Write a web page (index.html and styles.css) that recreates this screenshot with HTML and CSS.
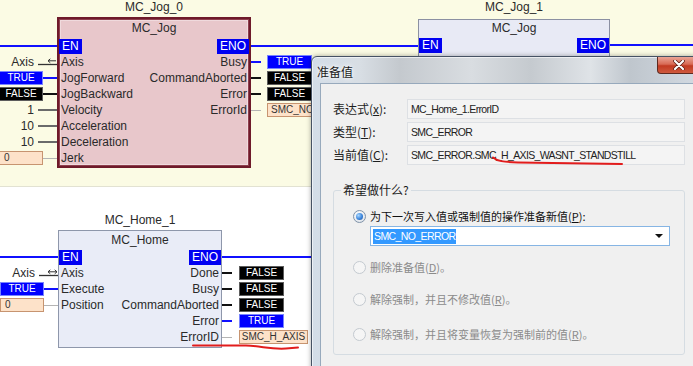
FILE: index.html
```html
<!DOCTYPE html>
<html>
<head>
<meta charset="utf-8">
<title>MC_Jog / MC_Home</title>
<link rel="stylesheet" href="styles.css">
</head>
<body>
<div class="canvas">
  <section class="sheet sheet-top">
    <div class="node node-jog0">
      <div class="inst">MC_Jog_0</div>
      <div class="ins ins-jog0">
        <div class="row"><span class="wire wire-blue wire-fill"></span></div>
        <div class="row"><span class="lit">Axis</span><span class="wire wire-ref"><svg width="19" height="10" viewBox="0 0 19 10"><path d="M0 6.5H19" stroke="#333" stroke-width="1.3"/><path d="M10 2.8H18M12.3 0.8L10 2.8L12.3 4.8" stroke="#333" stroke-width="1" fill="none"/></svg></span></div>
        <div class="row"><span class="val val-in val-true">TRUE</span><span class="wire wire-blue wire-s"></span></div>
        <div class="row"><span class="val val-in val-false">FALSE</span><span class="wire wire-black wire-s"></span></div>
        <div class="row"><span class="lit">1</span><span class="wire wire-grey"></span></div>
        <div class="row"><span class="lit">10</span><span class="wire wire-grey"></span></div>
        <div class="row"><span class="lit">10</span><span class="wire wire-grey"></span></div>
        <div class="row"><span class="val val-in val-num">0</span><span class="wire wire-light wire-s"></span></div>
      </div>
      <div class="block block-jog0">
        <div class="type type-jog0">MC_Jog</div>
        <div class="pins"><span class="en">EN</span><span class="en">ENO</span></div>
        <div class="pins"><span class="pin">Axis</span><span class="pin">Busy</span></div>
        <div class="pins"><span class="pin">JogForward</span><span class="pin">CommandAborted</span></div>
        <div class="pins"><span class="pin">JogBackward</span><span class="pin">Error</span></div>
        <div class="pins"><span class="pin">Velocity</span><span class="pin">ErrorId</span></div>
        <div class="pins"><span class="pin">Acceleration</span></div>
        <div class="pins"><span class="pin">Deceleration</span></div>
        <div class="pins"><span class="pin">Jerk</span></div>
      </div>
      <div class="outs outs-jog0">
        <div class="row"><span class="wire wire-blue link-jog0"></span></div>
        <div class="row"><span class="wire wire-blue wire-o"></span><span class="val val-out val-true">TRUE</span></div>
        <div class="row"><span class="wire wire-black wire-o"></span><span class="val val-out val-false">FALSE</span></div>
        <div class="row"><span class="wire wire-black wire-o"></span><span class="val val-out val-false">FALSE</span></div>
        <div class="row"><span class="wire wire-light wire-o"></span><span class="val val-out val-num val-left">SMC_NO</span></div>
      </div>
    </div>

    <div class="node node-jog1">
      <div class="inst">MC_Jog_1</div>
      <div class="block block-jog1">
        <div class="type type-jog1">MC_Jog</div>
        <div class="pins"><span class="en">EN</span><span class="en">ENO</span></div>
      </div>
      <div class="outs outs-jog1">
        <div class="row"><span class="wire wire-blue link-jog1"></span></div>
      </div>
    </div>
  </section>

  <section class="sheet sheet-bottom">
    <div class="node node-home">
      <div class="inst">MC_Home_1</div>
      <div class="ins ins-home">
        <div class="row"><span class="wire wire-blue wire-fill"></span></div>
        <div class="row"><span class="lit">Axis</span><span class="wire wire-ref"><svg width="19" height="10" viewBox="0 0 19 10"><path d="M0 6.5H19" stroke="#333" stroke-width="1.3"/><path d="M9 2.8H18M11.3 0.8L9 2.8L11.3 4.8M15.7 0.8L18 2.8L15.7 4.8" stroke="#333" stroke-width="1" fill="none"/></svg></span></div>
        <div class="row"><span class="val val-in val-true">TRUE</span><span class="wire wire-blue wire-s"></span></div>
        <div class="row"><span class="val val-in val-num">0</span><span class="wire wire-light wire-s"></span></div>
      </div>
      <div class="block block-home">
        <div class="type type-home">MC_Home</div>
        <div class="pins"><span class="en">EN</span><span class="en">ENO</span></div>
        <div class="pins"><span class="pin">Axis</span><span class="pin">Done</span></div>
        <div class="pins"><span class="pin">Execute</span><span class="pin">Busy</span></div>
        <div class="pins"><span class="pin">Position</span><span class="pin">CommandAborted</span></div>
        <div class="pins"><span class="pin"></span><span class="pin">Error</span></div>
        <div class="pins"><span class="pin"></span><span class="pin">ErrorID</span></div>
      </div>
      <div class="outs outs-home">
        <div class="row"><span class="wire wire-blue link-home"></span></div>
        <div class="row"><span class="wire wire-black wire-o"></span><span class="val val-out val-false">FALSE</span></div>
        <div class="row"><span class="wire wire-black wire-o"></span><span class="val val-out val-false">FALSE</span></div>
        <div class="row"><span class="wire wire-black wire-o"></span><span class="val val-out val-false">FALSE</span></div>
        <div class="row"><span class="wire wire-blue wire-o"></span><span class="val val-out val-true">TRUE</span></div>
        <div class="row"><span class="wire wire-light wire-o"></span><span class="val val-out val-num val-wide">SMC_H_AXIS</span></div>
      </div>
    </div>
  </section>

  <div class="dialog">
    <div class="titlebar"><span class="title">准备值</span></div>
    <div class="close"><svg width="12" height="10" viewBox="0 0 12 10"><path d="M2 1L10 9M10 1L2 9" stroke="#5a1a10" stroke-width="3.6" stroke-linecap="round"/><path d="M2 1L10 9M10 1L2 9" stroke="#fff" stroke-width="2.2" stroke-linecap="round"/></svg></div>
    <div class="client">
      <div class="fields">
        <span class="label">表达式(<u>x</u>):</span><span class="field">MC_Home_1.ErrorID</span>
        <span class="label">类型(<u>T</u>):</span><span class="field">SMC_ERROR</span>
        <span class="label">当前值(<u>C</u>):</span><span class="field">SMC_ERROR.SMC_H_AXIS_WASNT_STANDSTILL</span>
      </div>
      <div class="group">
        <span class="legend">希望做什么?</span>
        <div class="opt opt-1"><span class="radio radio-on"></span><span class="opt-text">为下一次写入值或强制值的操作准备新值(<u>P</u>):</span></div>
        <div class="combo"><span class="combo-sel">SMC_NO_ERROR</span><span class="combo-arrow"></span></div>
        <div class="opt opt-off opt-2"><span class="radio"></span><span class="opt-text">删除准备值(<u>D</u>)。</span></div>
        <div class="opt opt-off opt-3"><span class="radio"></span><span class="opt-text">解除强制，并且不修改值(<u>R</u>)。</span></div>
        <div class="opt opt-off opt-4"><span class="radio"></span><span class="opt-text">解除强制，并且将变量恢复为强制前的值(<u>R</u>)。</span></div>
      </div>
    </div>
  </div>

  <svg class="ink" width="693" height="366" viewBox="0 0 693 366">
    <path d="M493 157.5C497 161 503 162 518 162.5L622 164" stroke="#e21c1c" stroke-width="2" fill="none" stroke-linecap="round"/>
    <path d="M193 345.5L246 345.5C262 346 270 349.5 286 348.5L298 347.5" stroke="#e21c1c" stroke-width="2" fill="none" stroke-linecap="round"/>
  </svg>
</div>
</body>
</html>
```

FILE: styles.css
```css
* { box-sizing: border-box; margin: 0; padding: 0; }
html, body { width: 693px; height: 366px; overflow: hidden; background: #fff; }
body { font-family: "Liberation Sans", Arial, sans-serif; font-size: 12px; color: #2a2a2a; }

.canvas { position: relative; width: 693px; height: 366px; overflow: hidden; }
.sheet { position: relative; }
.sheet-top { height: 187px; background: #fbfbe4; border-bottom: 1px solid #e2e2d2; }
.sheet-bottom { height: 179px; background: #fff; }

/* function block nodes on the diagram canvas */
.node { position: absolute; display: grid; grid-template-rows: 17px auto; align-items: start; }
.node-jog0 { left: 0; top: 0; grid-template-columns: 57px 194px auto; }
.node-jog1 { left: 418px; top: 0; grid-template-columns: 192px auto; grid-template-rows: 19px auto; }
.node-home { left: 0; top: 26px; grid-template-columns: 58px 164px auto; }

.inst { grid-row: 1; height: 17px; line-height: 15px; text-align: center; white-space: nowrap; color: #2a2a2a; }
.node-jog0 .inst, .node-home .inst { grid-column: 2; }
.node-jog1 .inst { grid-column: 1; height: 19px; line-height: 15px; }

.ins { grid-row: 2; grid-column: 1; display: flex; flex-direction: column; }
.ins-jog0 { padding-top: 21px; }
.ins-home { padding-top: 19px; }
.outs { grid-row: 2; display: flex; flex-direction: column; }
.outs-jog0 { padding-top: 21px; }
.outs-jog1 { padding-top: 18px; }
.outs-home { padding-top: 19px; }

.row { height: 16px; display: flex; align-items: center; }
.ins .row { justify-content: flex-end; }

.block { grid-row: 2; }
.block-jog0 {
  height: 151px; background: #e8c7cb;
  border: 2px solid #6e1a2a;
  box-shadow: inset 0 0 0 1px #8e3f4d, inset 0 0 0 2px #f0dadd;
}
.block-jog1 { height: 45px; background: #e8eaf5; border: 1px solid #8b90a2; }
.block-home { height: 118px; background: #e9ecf7; border: 1px solid #8e97ab; }

.type { text-align: center; white-space: nowrap; color: #2a2a2a; }
.type-jog0 { height: 19px; line-height: 19px; }
.type-jog1 { height: 17px; line-height: 17px; }
.type-home { height: 18px; line-height: 18px; }

.pins { height: 16px; display: flex; justify-content: space-between; align-items: center; white-space: nowrap; }
.pin { padding: 0 2px; line-height: 16px; }
.en { height: 15px; line-height: 15px; padding: 0 3px; background: #0000f2; color: #fff; }

/* wires */
.wire { display: block; flex: none; }
.wire-fill { flex: 1; height: 2px; background: #1010ff; }
.wire-blue { height: 2px; background: #1010ff; }
.wire-black { height: 2px; background: #111; }
.wire-grey { width: 19px; height: 2px; background: #6a6a6a; }
.wire-light { height: 1px; background: #b4b4b4; }
.wire-s { width: 14px; }
.wire-o { width: 10px; margin-right: 6px; }
.outs-home .wire-o { margin-right: 7px; }
.wire-ref { width: 19px; height: 10px; margin-bottom: -1px; }
.wire-ref svg { display: block; }
.link-jog0 { width: 167px; }
.link-jog1 { width: 90px; }
.link-home { width: 95px; }

.lit { margin-right: 4px; white-space: nowrap; }

/* value boxes */
.val {
  display: block; height: 14px; line-height: 12px; font-size: 10px;
  border: 1px solid; text-align: center; white-space: nowrap; overflow: hidden;
}
.val-in { width: 44px; margin-left: -1px; }
.val-out { width: 45px; }
.val-wide { width: 69px; }
.val-true { background: #0000ff; border-color: #7884ff; color: #fff; }
.val-false { background: #000; border-color: #5c5c5c; color: #fff; }
.val-num { background: #fde2c9; border-color: #c79470; color: #333; text-align: left; padding-left: 4px; }
.val-left { padding-left: 3px; }
.val-wide { text-align: center; padding-left: 0; }

/* dialog */
.dialog {
  position: absolute; left: 311px; top: 56px; width: 400px; height: 320px; z-index: 5;
  border: 1px solid #465264; border-radius: 6px 6px 0 0;
  background: linear-gradient(90deg, #d3dde8 0%, #d8dee4 12%, #c4c9ce 22%, #d9dde1 40%, #c5cacf 55%, #dfe3e7 70%, #bfc6cd 80%, #d6dde5 100%);
  box-shadow: 0 0 5px rgba(0, 0, 0, 0.35), inset 0 0 0 1px rgba(255, 255, 255, 0.6);
  display: flex; flex-direction: column; padding-left: 8px;
  font-family: "Noto Sans CJK SC", "Liberation Sans", sans-serif;
}
.titlebar { height: 26px; display: flex; align-items: center; margin-left: -3px; padding-top: 2px; }
.title { font-size: 12px; color: #1b1b1b; text-shadow: 0 0 6px #fff, 0 0 3px #fff; }
.close {
  position: absolute; left: 345px; top: 0; width: 44px; height: 17px;
  border: 1px solid #5e2a20; border-top: none; border-radius: 0 0 4px 4px;
  background: linear-gradient(180deg, #eaa596 0%, #d86a55 45%, #c23a22 55%, #cf5a3e 100%);
  display: flex; align-items: center; justify-content: center;
}
.close svg { display: block; }
.client { flex: 1; background: #f0f0f0; border-top: 1px solid #97a9bc; border-left: 1px solid #97a9bc; }

.fields {
  display: grid; grid-template-columns: 74px 278px; grid-auto-rows: 20px; row-gap: 3px;
  padding: 15px 0 0 12px;
}
.label { font-size: 12px; line-height: 20px; color: #1e1e1e; white-space: nowrap; }
.field {
  border: 1px solid #dde0e4; background: #f4f4f4; padding-left: 3px;
  font-family: "Liberation Sans", Arial, sans-serif; font-size: 10.5px; letter-spacing: -0.65px;
  line-height: 18px; color: #222; white-space: nowrap; overflow: hidden;
}

.group {
  position: relative; width: 352px; height: 165px; margin: 25px 0 0 12px;
  border: 1px solid #d5dce2; border-radius: 3px;
  padding: 17px 0 0 19px;
  display: flex; flex-direction: column; align-items: flex-start;
}
.legend {
  position: absolute; left: 7px; top: -10px; padding: 0 2px; background: #f0f0f0;
  font-size: 12px; line-height: 18px; color: #1a1a1a;
}
.opt { height: 16px; display: flex; align-items: center; gap: 4px; white-space: nowrap; }
.opt-text { font-size: 11px; color: #111; }
.opt-off .opt-text { color: #8b8b8b; }
.opt-2 { margin-top: 13px; }
.opt-3 { margin-top: 16px; }
.opt-4 { margin-top: 19px; }
.radio {
  position: relative; width: 13px; height: 13px; border-radius: 50%; flex: none;
  border: 1px solid #c4cad0; background: #f5f5f5;
}
.radio-on { border-color: #7f92a8; background: radial-gradient(circle at 40% 35%, #ffffff, #d6dde6); }
.radio-on::after {
  content: ""; position: absolute; left: 2px; top: 2px; width: 7px; height: 7px; border-radius: 50%;
  background: radial-gradient(circle at 35% 35%, #a9d7ff 0%, #3c86dc 55%, #1c4f9c 100%);
}
.combo {
  width: 300px; height: 20px; margin: 2px 0 0 17px;
  border: 1px solid #86b5e4; background: #fff;
  display: flex; align-items: center; padding: 0 6px 0 2px;
}
.combo-sel {
  background: #3399ff; color: #fff; padding: 0 1px; line-height: 15px;
  font-family: "Liberation Sans", Arial, sans-serif; font-size: 10.5px; letter-spacing: -0.6px;
}
.combo-arrow {
  margin-left: auto; width: 0; height: 0;
  border-left: 4px solid transparent; border-right: 4px solid transparent; border-top: 4px solid #111;
}

.ink { position: absolute; left: 0; top: 0; z-index: 10; pointer-events: none; }
```
